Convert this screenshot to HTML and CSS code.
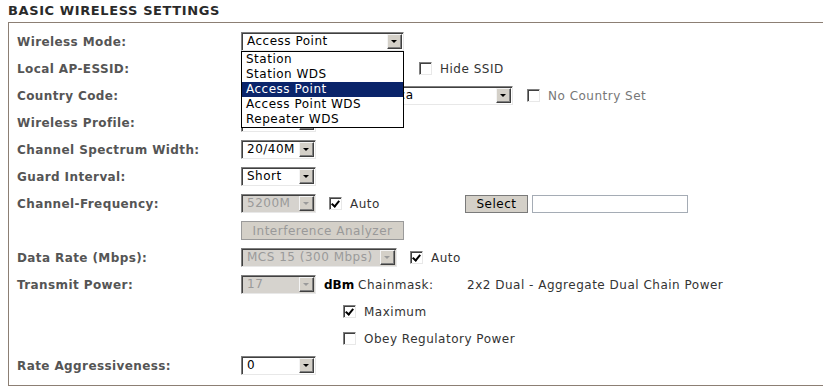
FILE: index.html
```html
<!DOCTYPE html>
<html lang="en">
<head>
    <meta charset="UTF-8">
    <title>Basic Wireless Settings</title>
    <link rel="stylesheet" href="styles.css">
</head>
<body>
    <h2 class="section-title">BASIC WIRELESS SETTINGS</h2>
    <div class="settings-box">
        <div class="row">
            <span class="label">Wireless Mode:</span>
            <div class="field">
                <div class="select-wrap">
                    <span class="select w-wide"><span class="select-value"><span class="focus-ring">Access Point</span></span><span class="select-arrow"></span></span>
                    <!-- open dropdown list -->
                    <ul class="dropdown">
                        <li>Station</li>
                        <li>Station WDS</li>
                        <li class="selected">Access Point</li>
                        <li>Access Point WDS</li>
                        <li>Repeater WDS</li>
                    </ul>
                </div>
            </div>
        </div>
        <div class="row">
            <span class="label">Local AP-ESSID:</span>
            <div class="field">
                <span class="text-input w-wide"></span>
                <span class="check gap-left-15"></span>
                <span class="check-text">Hide SSID</span>
            </div>
        </div>
        <div class="row">
            <span class="label">Country Code:</span>
            <div class="field">
                <span class="select w-country"><span class="select-value country-value">United States of America</span><span class="select-arrow"></span></span>
                <span class="check gap-left-14"></span>
                <span class="check-text muted">No Country Set</span>
            </div>
        </div>
        <div class="row">
            <span class="label">Wireless Profile:</span>
            <div class="field">
                <span class="select w-small"><span class="select-value"></span><span class="select-arrow"></span></span>
            </div>
        </div>
        <div class="row">
            <span class="label">Channel Spectrum Width:</span>
            <div class="field">
                <span class="select w-small"><span class="select-value">20/40M</span><span class="select-arrow"></span></span>
            </div>
        </div>
        <div class="row">
            <span class="label">Guard Interval:</span>
            <div class="field">
                <span class="select w-small"><span class="select-value">Short</span><span class="select-arrow"></span></span>
            </div>
        </div>
        <div class="row">
            <span class="label">Channel-Frequency:</span>
            <div class="field">
                <span class="select w-small disabled"><span class="select-value">5200M</span><span class="select-arrow"></span></span>
                <span class="check checked gap-left-13"></span>
                <span class="check-text auto-fixed">Auto</span>
                <button class="btn select-btn">Select</button>
                <span class="text-input w-freq"></span>
            </div>
        </div>
        <div class="row">
            <span class="label"></span>
            <div class="field">
                <button class="btn disabled w-wide" disabled>Interference Analyzer</button>
            </div>
        </div>
        <div class="row">
            <span class="label">Data Rate (Mbps):</span>
            <div class="field">
                <span class="select w-rate disabled"><span class="select-value">MCS 15 (300 Mbps)</span><span class="select-arrow"></span></span>
                <span class="check checked gap-left-13"></span>
                <span class="check-text">Auto</span>
            </div>
        </div>
        <div class="row">
            <span class="label">Transmit Power:</span>
            <div class="field">
                <span class="select w-small disabled"><span class="select-value">17</span><span class="select-arrow"></span></span>
                <b class="unit">dBm</b>
                <span class="chain-label">Chainmask:</span>
                <span class="chain-value">2x2 Dual - Aggregate Dual Chain Power</span>
            </div>
        </div>
        <div class="row">
            <span class="label"></span>
            <div class="field indent">
                <span class="check checked"></span>
                <span class="check-text">Maximum</span>
            </div>
        </div>
        <div class="row">
            <span class="label"></span>
            <div class="field indent">
                <span class="check"></span>
                <span class="check-text">Obey Regulatory Power</span>
            </div>
        </div>
        <div class="row">
            <span class="label">Rate Aggressiveness:</span>
            <div class="field">
                <span class="select w-small"><span class="select-value">0</span><span class="select-arrow"></span></span>
            </div>
        </div>
    </div>
</body>
</html>
```
FILE: styles.css
```css
body {
    margin: 0 8px;
    background: #ffffff;
    font-family: "DejaVu Sans", Verdana, sans-serif;
    font-size: 12px;
    letter-spacing: 0.5px;
    color: #333;
}

.section-title {
    font-size: 13px;
    font-weight: bold;
    letter-spacing: 0.6px;
    color: #2a2a2a;
    margin: 3px 0 4px 0;
    line-height: 15px;
}

.settings-box {
    width: 818px;
    box-sizing: border-box;
    border: 1px solid #8c7f74;
    padding: 5px 8px 6px 8px;
}

.row {
    display: grid;
    grid-template-columns: 224px 1fr;
    align-items: center;
    height: 27px;
}

.label {
    font-weight: bold;
    letter-spacing: 0.4px;
    color: #555;
    white-space: nowrap;
}

.field {
    display: flex;
    align-items: center;
    white-space: nowrap;
}

.field.indent {
    padding-left: 102px;
}

/* classic windows style select */
.select-wrap {
    position: relative;
}

.select {
    display: flex;
    align-items: center;
    height: 19px;
    box-sizing: border-box;
    background: #fff;
    border-style: solid;
    border-width: 1px;
    border-color: #7f7f7f #e8e8e8 #e8e8e8 #7f7f7f;
    box-shadow: inset 1px 1px 0 #404040;
    padding: 1px 1px 1px 2px;
    color: #000;
}

.select-value {
    flex: 1;
    padding-left: 3px;
    white-space: nowrap;
    overflow: hidden;
    line-height: 15px;
}

.country-value {
    letter-spacing: 0.7px;
}

.focus-ring {
    display: block;
    outline: 1px dotted #333;
    margin-left: -3px;
    padding-left: 3px;
}

.select-arrow {
    position: relative;
    width: 15px;
    height: 15px;
    flex: none;
    box-sizing: border-box;
    background: #d4d0c8;
    border: 1px solid;
    border-color: #f4f4f4 #404040 #404040 #f4f4f4;
    box-shadow: inset -1px -1px 0 #808080;
    margin-left: 2px;
}

.select-arrow::after {
    content: "";
    position: absolute;
    left: 3px;
    top: 5px;
    border-left: 3px solid transparent;
    border-right: 3px solid transparent;
    border-top: 3px solid #000;
}

.select.disabled {
    background: #d6d3ce;
}

.select.disabled .select-value {
    color: #9a9a9a;
}

.select.disabled .select-arrow::after {
    border-top-color: #9a9a9a;
}

.w-wide { width: 163px; }
.w-small { width: 75px; }
.w-country { width: 272px; }
.w-rate { width: 156px; }
.w-freq { width: 156px; }

/* open dropdown list */
.dropdown {
    position: absolute;
    left: 0;
    top: 19px;
    width: 163px;
    box-sizing: border-box;
    margin: 0;
    padding: 0;
    list-style: none;
    background: #fff;
    border: 1px solid #000;
    z-index: 10;
}

.dropdown li {
    height: 15px;
    line-height: 15px;
    padding-left: 4px;
    color: #000;
    white-space: nowrap;
}

.dropdown li.selected {
    background: #0a246a;
    color: #fff;
}

.text-input {
    display: block;
    height: 18px;
    box-sizing: border-box;
    border: 1px solid #a5acb5;
    background: #fff;
}

/* checkboxes */
.check {
    position: relative;
    display: inline-block;
    flex: none;
    width: 13px;
    height: 13px;
    box-sizing: border-box;
    background: #fff;
    border: 1px solid;
    border-color: #808080 #e8e8e8 #e8e8e8 #808080;
    box-shadow: inset 1px 1px 0 #404040;
}

.check.checked::after {
    content: "";
    position: absolute;
    left: 3px;
    top: 1px;
    width: 3px;
    height: 6px;
    border: solid #000;
    border-width: 0 2px 2px 0;
    transform: rotate(40deg);
}

.check-text {
    margin-left: 8px;
    color: #333;
}

.check-text.muted {
    color: #777;
}

.auto-fixed {
    width: 115px;
}

.gap-left-13 { margin-left: 13px; }
.gap-left-14 { margin-left: 14px; }
.gap-left-15 { margin-left: 15px; }

.btn {
    font-family: "DejaVu Sans", Verdana, sans-serif;
    font-size: 12px;
    letter-spacing: 0.5px;
    height: 18px;
    box-sizing: border-box;
    padding: 0 6px;
    background: #d4d0c8;
    color: #000;
    border: 1px solid #7a7a7a;
}

.btn.disabled {
    color: #999;
    border-color: #9a9a9a;
    height: 19px;
    padding: 0;
}

.select-btn {
    width: 63px;
    margin-right: 4px;
}

.unit {
    display: inline-block;
    width: 34px;
    margin-left: 8px;
    letter-spacing: 0;
    color: #000;
}

.chain-label {
    width: 109px;
    color: #333;
}

.chain-value {
    color: #333;
}
```
